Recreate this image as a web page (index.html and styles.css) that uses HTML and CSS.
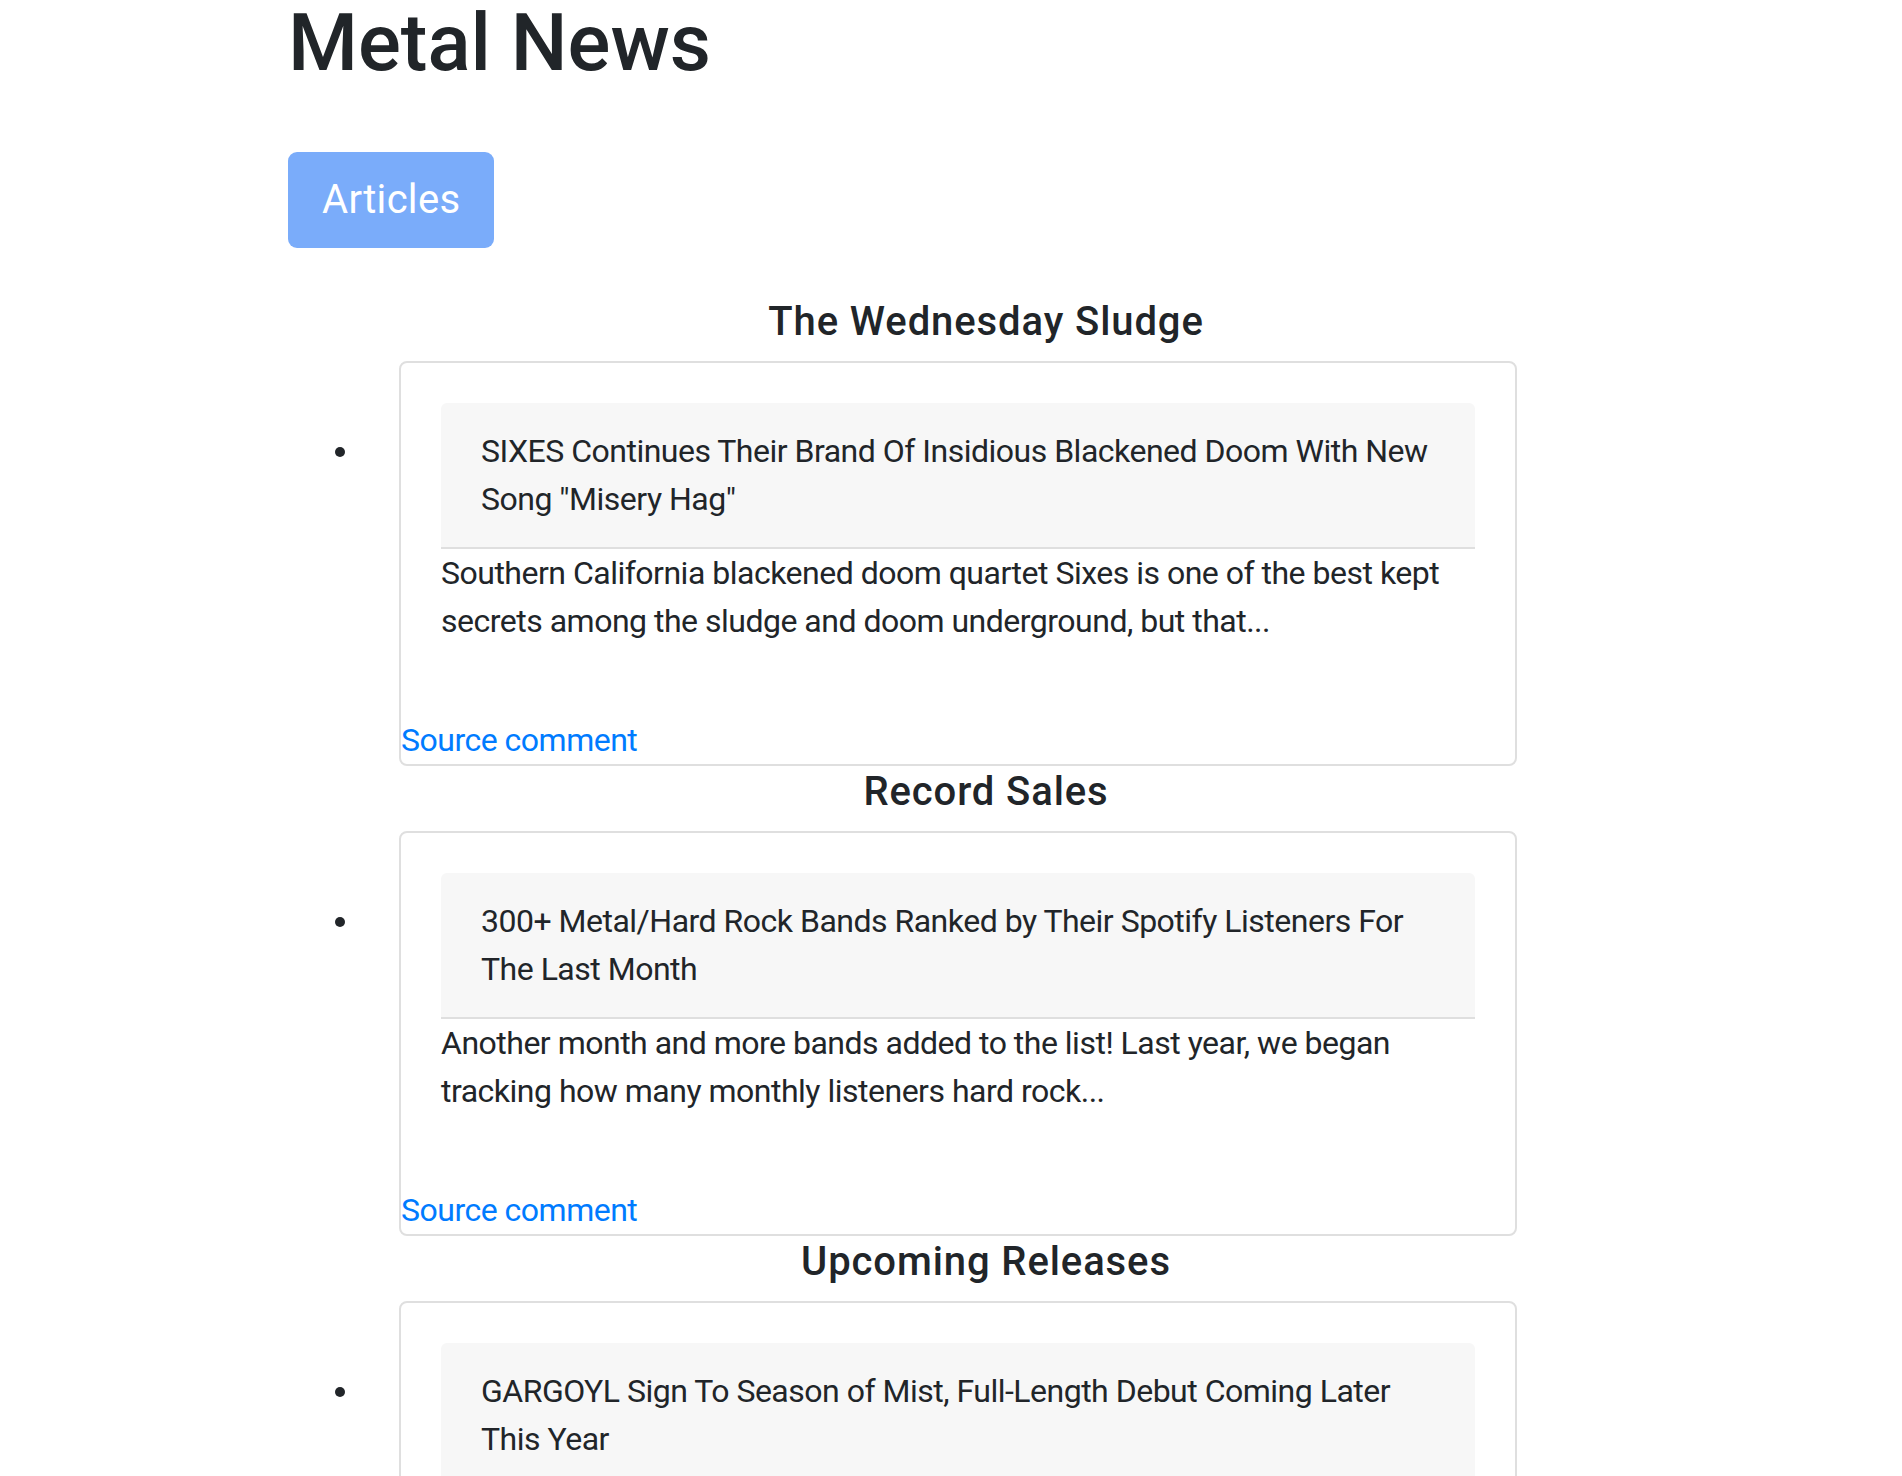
FILE: index.html
```html
<!DOCTYPE html>
<html lang="en">
<head>
<meta charset="utf-8">
<title>Metal News</title>
<link rel="stylesheet" href="styles.css">
</head>
<body>
<div class="container">
  <h1 class="title">Metal News</h1>
  <div class="nav">
    <button class="btn" disabled>Articles</button>
  </div>

  <section class="section">
    <h5 class="section-title">The Wednesday Sludge</h5>
    <ul class="articles">
      <li>
        <div class="card">
          <div class="card-body">
            <div class="card-header">SIXES Continues Their Brand Of Insidious Blackened Doom With New Song "Misery Hag"</div>
            <p class="card-text">Southern California blackened doom quartet Sixes is one of the best kept secrets among the sludge and doom underground, but that...</p>
          </div>
          <a class="source" href="#">Source comment</a>
        </div>
      </li>
    </ul>
  </section>

  <section class="section">
    <h5 class="section-title">Record Sales</h5>
    <ul class="articles">
      <li>
        <div class="card">
          <div class="card-body">
            <div class="card-header">300+ Metal/Hard Rock Bands Ranked by Their Spotify Listeners For The Last Month</div>
            <p class="card-text">Another month and more bands added to the list! Last year, we began tracking how many monthly listeners hard rock...</p>
          </div>
          <a class="source" href="#">Source comment</a>
        </div>
      </li>
    </ul>
  </section>

  <section class="section">
    <h5 class="section-title">Upcoming Releases</h5>
    <ul class="articles">
      <li>
        <div class="card">
          <div class="card-body">
            <div class="card-header">GARGOYL Sign To Season of Mist, Full-Length Debut Coming Later This Year</div>
            <p class="card-text">GARGOYL have signed to Season of Mist, with their full-length debut coming later this year...</p>
          </div>
          <a class="source" href="#">Source comment</a>
        </div>
      </li>
    </ul>
  </section>
</div>
</body>
</html>
```
FILE: styles.css
```css
html, body {
  margin: 0;
  padding: 0;
  background: #fff;
}

body {
  font-family: Roboto, "Liberation Sans", Arial, sans-serif;
  font-size: 32px;
  line-height: 48px;
  color: #212529;
}

.container {
  width: 1396px;
  margin-left: 288px;
}

.title {
  margin: -5px 0 0 0;
  font-size: 80px;
  line-height: 96px;
  font-weight: 500;
  color: #212529;
}

.nav {
  padding-top: 61px;
}

.btn {
  display: inline-block;
  margin: 0;
  padding: 16px 32px;
  border: 2px solid transparent;
  border-radius: 9px;
  background: #7aacfa;
  color: #fff;
  font-family: Roboto, "Liberation Sans", Arial, sans-serif;
  font-size: 40px;
  line-height: 60px;
  font-weight: 400;
  letter-spacing: 0.3px;
  cursor: default;
}

.section {
  margin-top: 2px;
}

.nav + .section {
  margin-top: 50px;
}

.section-title {
  margin: 0 0 15px 0;
  text-align: center;
  font-size: 40px;
  line-height: 48px;
  font-weight: 500;
  letter-spacing: 0.9px;
  color: #212529;
}

.articles {
  margin: 0;
  padding-left: 74px;
  list-style: disc;
}

.card {
  width: 1118px;
  box-sizing: border-box;
  margin-left: 37px;
  border: 2px solid #dfdfdf;
  border-radius: 8px;
  background: #fff;
  letter-spacing: -0.5px;
}

.card-body {
  padding: 40px;
}

.card-header {
  padding: 24px 40px;
  background: #f7f7f7;
  border-bottom: 2px solid #dfdfdf;
  border-radius: 6px 6px 0 0;
}

.card-text {
  margin: 0 0 31px 0;
}

.source {
  display: block;
  color: #007bff;
  text-decoration: none;
}
```
